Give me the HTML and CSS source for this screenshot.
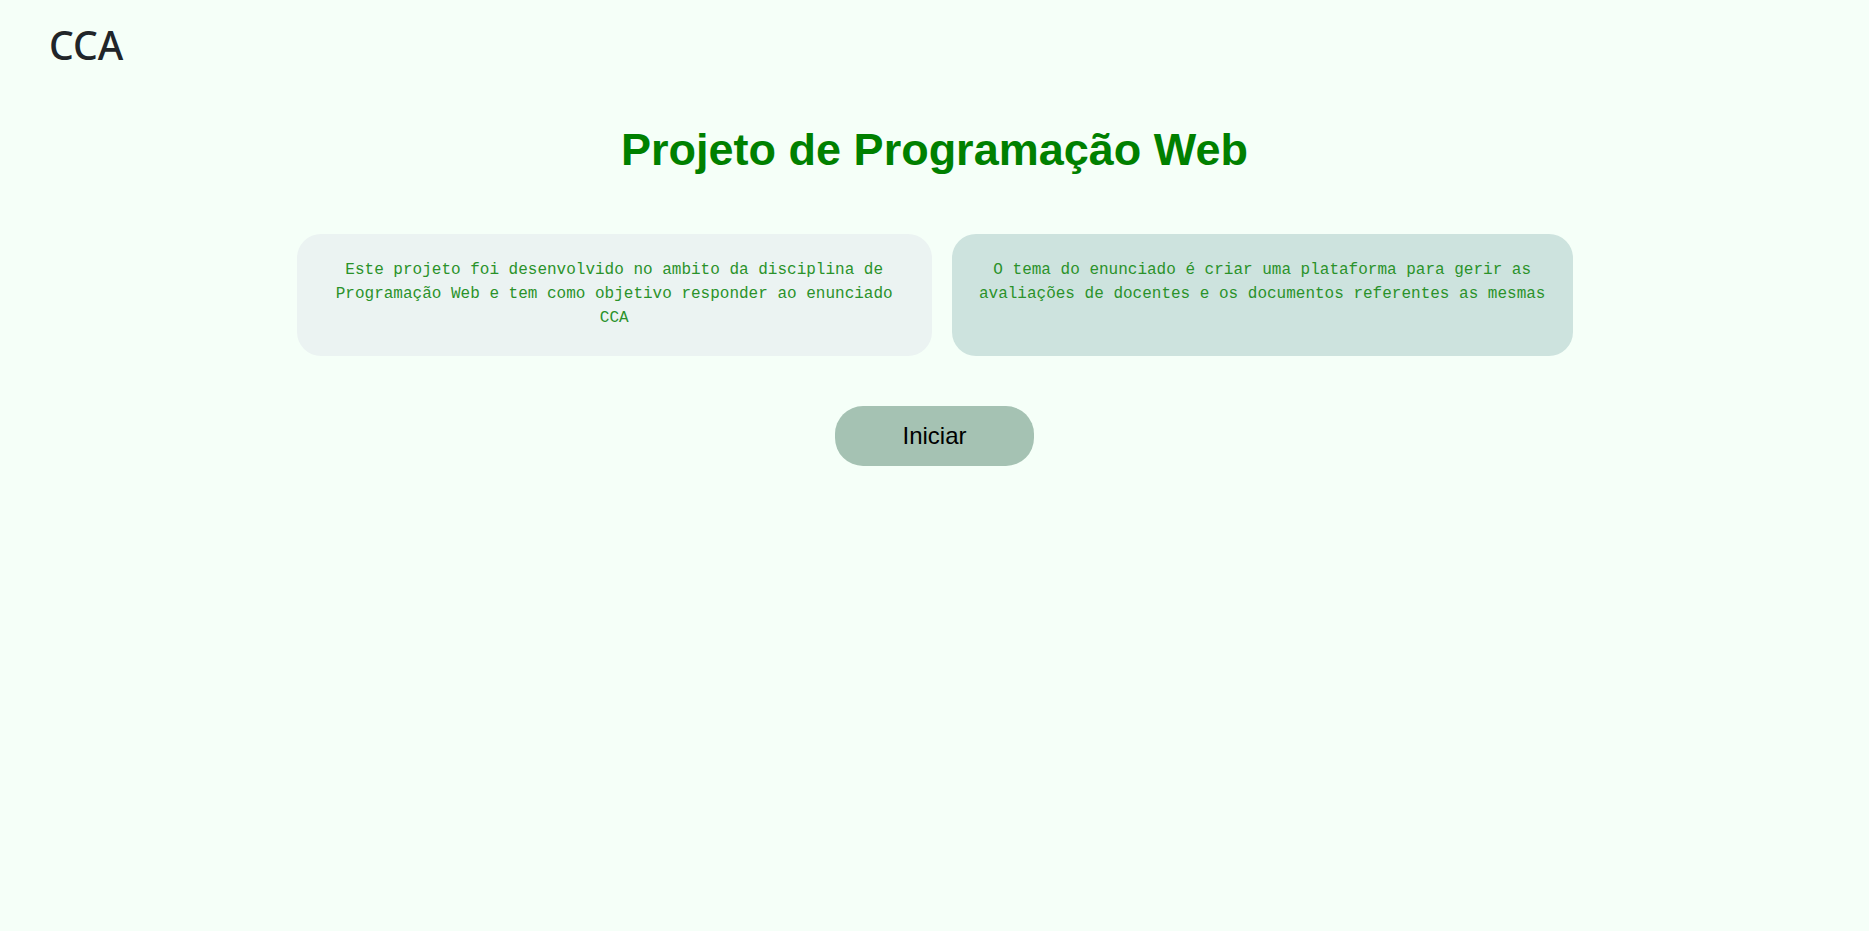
FILE: index.html
```html
<!DOCTYPE html>
<html lang="pt">
<head>
<meta charset="utf-8">
<title>CCA</title>
<link rel="stylesheet" href="styles.css">
</head>
<body>
<header class="navbar">
  <span class="brand">CCA</span>
</header>
<main class="content">
  <h1 class="title">Projeto de Programação Web</h1>
  <section class="cards">
    <div class="card card-light">
      <p>Este projeto foi desenvolvido no ambito da disciplina de Programação Web e tem como objetivo responder ao enunciado CCA</p>
    </div>
    <div class="card card-teal">
      <p>O tema do enunciado é criar uma plataforma para gerir as avaliações de docentes e os documentos referentes as mesmas</p>
    </div>
  </section>
  <div class="actions">
    <button class="start-btn">Iniciar</button>
  </div>
</main>
</body>
</html>
```
FILE: styles.css
```css
html, body {
  margin: 0;
  padding: 0;
}
body {
  background: #f5fff8;
  min-height: 931px;
  font-family: "Liberation Sans", Arial, sans-serif;
}
.navbar {
  padding: 25px 49px 0;
  height: 39px;
}
.brand {
  font-family: "Noto Sans", "Open Sans", sans-serif;
  font-weight: 500;
  font-size: 39px;
  line-height: 39px;
  color: #212529;
  display: block;
}
.content {
  display: flex;
  flex-direction: column;
  align-items: center;
}
.title {
  margin: 60px 0 0;
  font-family: "Liberation Sans", Arial, sans-serif;
  font-weight: bold;
  font-size: 45px;
  line-height: 1.15;
  color: #008000;
  text-align: center;
}
.cards {
  margin-top: 58px;
  width: 1276px;
  display: flex;
  gap: 20px;
}
.card {
  flex: 1 1 auto;
  padding: 24px;
  border-radius: 24px;
  min-height: 74px;
}
.card p {
  margin: 0;
  font-family: "Liberation Mono", "Courier New", monospace;
  font-size: 16px;
  line-height: 24px;
  color: #2a922a;
  text-align: center;
}
.card-light {
  background: #ebf3f2;
}
.card-teal {
  background: #cde3de;
}
.actions {
  margin-top: 50px;
}
.start-btn {
  width: 199px;
  height: 60px;
  border: none;
  border-radius: 28px;
  background: #a5c2b3;
  color: #000;
  font-family: "Liberation Sans", Arial, sans-serif;
  font-size: 24px;
  cursor: pointer;
}
```
